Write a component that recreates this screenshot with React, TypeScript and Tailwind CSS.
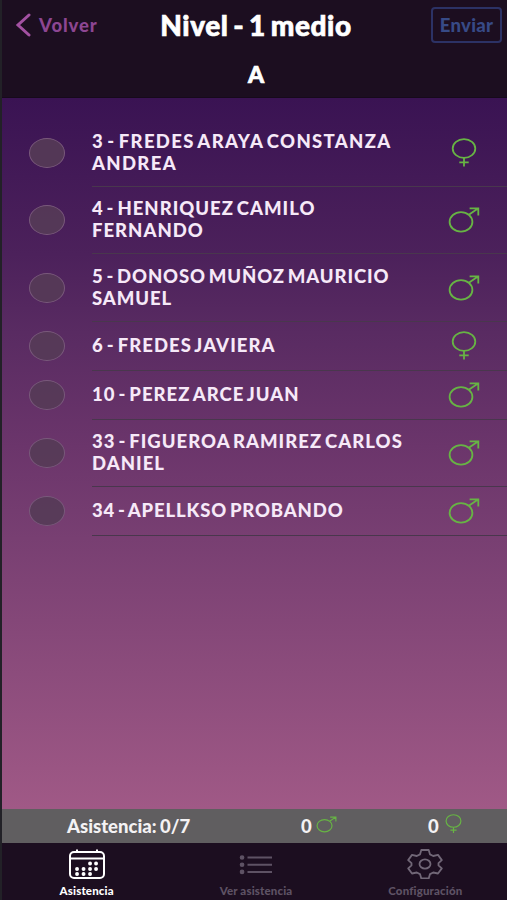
type Gender = "f" | "m";

const students: { lines: string[]; gender: Gender; height: string; tracking: string }[] = [
  { lines: ["3 - FREDES ARAYA CONSTANZA", "ANDREA"], gender: "f", height: "h-[68px]", tracking: "tracking-[1.33px]" },
  { lines: ["4 - HENRIQUEZ CAMILO", "FERNANDO"], gender: "m", height: "h-[67px]", tracking: "tracking-[1px]" },
  { lines: ["5 - DONOSO MUÑOZ MAURICIO", "SAMUEL"], gender: "m", height: "h-[68px]", tracking: "tracking-[0.9px]" },
  { lines: ["6 - FREDES JAVIERA"], gender: "f", height: "h-[49px]", tracking: "tracking-[1.05px]" },
  { lines: ["10 - PEREZ ARCE JUAN"], gender: "m", height: "h-[49px]", tracking: "tracking-[1.02px]" },
  { lines: ["33 - FIGUEROA RAMIREZ CARLOS", "DANIEL"], gender: "m", height: "h-[67px]", tracking: "tracking-[1.02px]" },
  { lines: ["34 - APELLKSO PROBANDO"], gender: "m", height: "h-[49px]", tracking: "tracking-[0.85px]" },
];

function GenderIcon({ gender, className }: { gender: Gender; className: string }) {
  return (
    <svg viewBox="0 0 32 30" preserveAspectRatio="none" className={className} fill="none" stroke="#67b444" strokeWidth="1.8">
      {gender === "f" ? (
        <>
          <ellipse cx="16" cy="10.5" rx="11.3" ry="9.4" />
          <path d="M16 19.9V28.5M11.3 24.3h9.4" />
        </>
      ) : (
        <>
          <ellipse cx="13" cy="16.9" rx="11.4" ry="9.7" />
          <path d="M20.8 9.8L30 3.4M21.6 3.4H30.3V10.4" />
        </>
      )}
    </svg>
  );
}

function Header() {
  return (
    <header className="flex h-[98px] flex-col border-b border-[#160a1b] bg-[#1c0e20]">
      <div className="grid h-[50px] grid-cols-[1fr_auto_1fr] items-center">
        <button className="flex items-center gap-[8px] pl-[13px] text-[18.5px] leading-none font-black text-[#8d4692]">
          <svg viewBox="0 0 16 24" className="h-6 w-4" fill="none" stroke="#a351a2" strokeWidth="3" strokeLinecap="round">
            <path d="M14 2L3 12L14 22" />
          </svg>
          <span className="tracking-[0.9px]">Volver</span>
        </button>
        <h1 className="pb-[1px] pl-[3px] text-[28px] leading-none font-black tracking-[0.6px] text-white [-webkit-text-stroke:0.7px_white] [word-spacing:-2.5px]">
          Nivel - 1 medio
        </h1>
        <button className="mr-[5px] h-9 w-[71px] justify-self-end rounded-[4px] border-2 border-[#2c3265] text-[18.5px] leading-none font-black tracking-[0.3px] text-[#374a86]">
          Enviar
        </button>
      </div>
      <h2 className="pt-[10px] pl-[3px] text-center text-[23px] leading-[28px] font-black text-white [-webkit-text-stroke:0.7px_white]">A</h2>
    </header>
  );
}

export default function App() {
  return (
    <div className="flex h-[900px] w-[507px] flex-col overflow-hidden border-l-2 border-[#222127] bg-[#1c0e20] font-[Lato,sans-serif]">
      <Header />
      <main className="h-[711px] bg-[linear-gradient(180deg,#3a1353_0%,#4c215b_22%,#592b62_33%,#6b356b_49%,#783f72_62%,#a05986_100%)] pt-[21px]">
        <ul>
          {students.map((s) => (
            <li key={s.lines[0]} className={`flex ${s.height}`}>
              <div className="flex w-[90px] items-center pb-px pl-[27px]">
                <span className="h-[30px] w-[36px] rounded-[50%] border border-[#79597b] bg-[#553b56]/90" />
              </div>
              <div className="flex flex-1 items-center justify-between border-b border-[#49374d]">
                <div
                  className={`pb-[2px] text-[18.5px] leading-[22px] font-black whitespace-nowrap text-[#f6e9f8] [word-spacing:-2.5px] ${s.tracking}`}
                >
                  {s.lines.map((l) => (
                    <div key={l}>{l}</div>
                  ))}
                </div>
                <GenderIcon gender={s.gender} className="mr-[27px] h-[30px] w-8" />
              </div>
            </li>
          ))}
        </ul>
      </main>
      <section className="flex h-[34px] items-center bg-[#605e60] text-[18.5px] leading-none font-black text-[#f4f2f4]">
        <div className="w-[254px] shrink-0 pl-[65px] [word-spacing:-1px]">Asistencia: 0/7</div>
        <div className="flex w-[126px] shrink-0 items-center gap-[4px] pl-[45px]">
          0 <GenderIcon gender="m" className="mb-[3px] h-[19px] w-[21px]" />
        </div>
        <div className="flex items-center gap-[4px] pl-[46px]">
          0 <GenderIcon gender="f" className="mb-[4px] h-[20px] w-[21px]" />
        </div>
      </section>
      <nav className="grid h-[57px] w-[508px] grid-cols-3 pt-[6px] text-[11.5px] leading-[14px] font-black tracking-[0.15px] text-[#5e5264]">
        <div className="flex flex-col items-center gap-[5px] text-white">
          <svg viewBox="0 0 38 30" className="h-[30px] w-[38px]" fill="none" stroke="currentColor" strokeWidth="2">
            <rect x="2" y="3" width="34" height="26" rx="4" />
            <path d="M2 9.5h34M9 0.5V4M29 0.5V4" />
            <path
              d="M22 14.5h.1M28 14.5h.1M9 20h.1M15.5 20h.1M22 20h.1M28 20h.1M9 25h.1M15.5 25h.1M22 25h.1"
              strokeWidth="3.8"
              strokeLinecap="round"
            />
          </svg>
          <span>Asistencia</span>
        </div>
        <div className="flex flex-col items-center gap-[5px]">
          <svg viewBox="0 0 34 30" className="h-[30px] w-[34px]" fill="none" stroke="currentColor" strokeWidth="2">
            <path d="M8.5 8.5H33M8.5 15.7H33M8.5 22.9H33" />
            <path d="M3 8.5h.1M3 15.7h.1M3 22.9h.1" strokeWidth="4.6" strokeLinecap="round" />
          </svg>
          <span>Ver asistencia</span>
        </div>
        <div className="flex flex-col items-center gap-[5px]">
          <svg viewBox="0 0 36 30" className="h-[30px] w-9" fill="none" stroke="#716777" strokeWidth="1.8" strokeLinejoin="round">
            <path d="M14.3 1h7.4l1.3 4.4 3.2 1.6 4.8-1.1 3.8 5.2-3.3 3v2.3l3.3 3-3.8 5.1-4.8-1-3.2 1.6-1.3 4.4h-7.4L13 25.1l-3.2-1.6-4.8 1-3.8-5.1 3.3-3v-2.3l-3.3-3L5 5.9 9.8 7 13 5.4z" />
            <ellipse cx="18" cy="15" rx="5.5" ry="4.6" />
          </svg>
          <span>Configuración</span>
        </div>
      </nav>
    </div>
  );
}
